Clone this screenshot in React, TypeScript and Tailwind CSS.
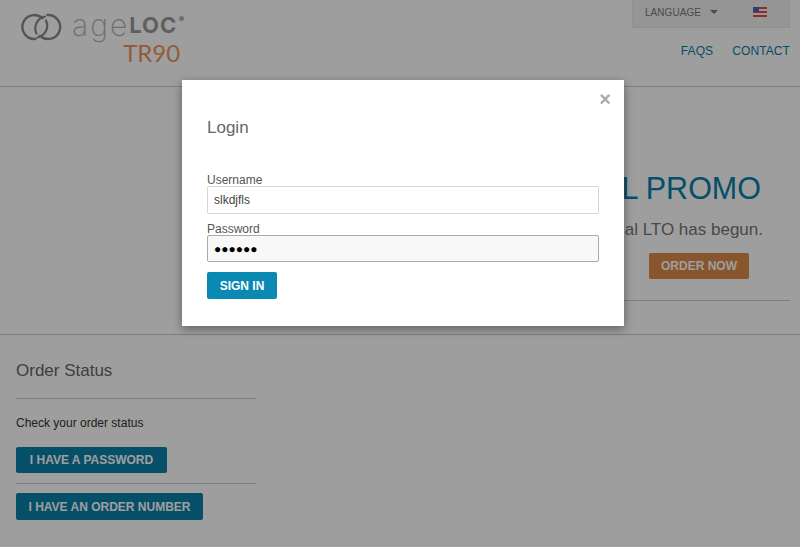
const SANS = "font-['Liberation_Sans',Arial,sans-serif]";

function Logo() {
  return (
    <div className="flex items-start">
      <svg width="41" height="28" viewBox="0 0 41 28" fill="none" className="mt-[13px] ml-[21px]">
        <path d="M21.5 5.2A12 12 0 1 0 14.5 26" stroke="#8a8a8a" strokeWidth="2.4" strokeLinecap="round" />
        <path d="M19 22.8A12 12 0 1 0 26.5 2" stroke="#8a8a8a" strokeWidth="2.4" strokeLinecap="round" />
        <path d="M25 7.5A12 12 0 0 1 16.5 24.5" stroke="#8a8a8a" strokeWidth="2.2" strokeLinecap="round" />
        <path d="M15.5 20.5A12 12 0 0 1 24 3.5" stroke="#8a8a8a" strokeWidth="2.2" strokeLinecap="round" />
      </svg>
      <div className="ml-[10px] flex flex-col items-end">
        <div className="mt-[8px] flex h-[35px] items-start leading-[34px] font-['Inter',sans-serif]">
          <span className="text-[30px] font-extralight tracking-[2px] text-[#b4b4b4]">age</span>
          <span className="text-[22px] font-bold tracking-[1px] text-[#9a9a9a]">LOC</span>
          <span className="mt-[8px] ml-[2px] h-[5px] w-[5px] rounded-full bg-[#b4b4b4]" />
        </div>
        <div className="mt-[-2px] mr-[4px] text-[24px] leading-[24px] text-[#ee9460] font-['Lato',sans-serif]">TR90</div>
      </div>
    </div>
  );
}

function Flag() {
  return (
    <svg width="14" height="10" viewBox="0 0 14 10">
      <rect width="14" height="10" fill="#f4f4f4" />
      <rect y="0" width="14" height="2" fill="#e04a4a" />
      <rect y="4" width="14" height="2" fill="#e04a4a" />
      <rect y="8" width="14" height="2" fill="#e04a4a" />
      <rect width="6" height="5" fill="#4a68b8" />
    </svg>
  );
}

function Header() {
  return (
    <header className="flex h-[87px] justify-between border-b border-[#ccc]">
      <Logo />
      <div className="flex flex-col items-end pr-[10px]">
        <div className="flex h-[28px] w-[158px] items-center border-x border-b border-[#e8e8e8] bg-[#f1f1f1] pb-[3px] pl-[12px] text-[10px] tracking-[0.05px] text-[#777]">
          <span>LANGUAGE</span>
          <span className="ml-[9px] h-0 w-0 border-x-[4px] border-t-[4px] border-x-transparent border-t-[#777]" />
          <span className="ml-[35px] flex"><Flag /></span>
        </div>
        <nav className="mt-[16px] flex gap-[19px] text-[12px] leading-[15px] tracking-[0.1px] text-[#0a7ea4]">
          <span>FAQS</span>
          <span>CONTACT</span>
        </nav>
      </div>
    </header>
  );
}

function Hero() {
  return (
    <section className="flex h-[248px] flex-col border-b border-[#ccc]">
      <div className="ml-auto mr-[10px] flex h-[214px] w-[560px] flex-col items-end border-b border-[#ccc] pr-[29px]">
        <h1 className="mt-[83px] text-[30.5px] leading-[36px] text-[#0a80a8]">ANNUAL PROMO</h1>
        <p className="mt-[13px] -mr-[2px] text-[17px] leading-[22px] text-[#757575]">The annual LTO has begun.</p>
        <button className="mt-[12px] mr-[12px] h-[26px] w-[100px] rounded-[2px] bg-[#dc8a48] text-[12px] font-bold text-white">
          ORDER NOW
        </button>
      </div>
    </section>
  );
}

function OrderStatus() {
  return (
    <section className="ml-[16px] w-[240px]">
      <h2 className="mt-[26px] text-[17px] leading-[20px] text-[#666]">Order Status</h2>
      <div className="mt-[17px] border-t border-[#ccc]" />
      <p className="mt-[17px] text-[12px] leading-[14px] text-[#333]">Check your order status</p>
      <button className="mt-[17px] flex h-[26px] w-[151px] items-center justify-center rounded-[2px] bg-[#0a80a8] text-[12px] font-bold text-white">
        I HAVE A PASSWORD
      </button>
      <div className="mt-[10px] border-t border-[#ccc]" />
      <button className="mt-[9px] flex h-[27px] w-[187px] items-center justify-center rounded-[2px] bg-[#0a80a8] text-[12px] font-bold text-white">
        I HAVE AN ORDER NUMBER
      </button>
    </section>
  );
}

function LoginModal() {
  return (
    <div className="absolute inset-0 bg-black/[0.38]">
      <div className="absolute left-[182px] top-[80px] h-[246px] w-[442px] bg-white px-[25px] shadow-[0_3px_9px_rgba(0,0,0,0.4)]">
        <span className="absolute right-[13px] top-[9px] text-[20px] font-bold leading-[20px] text-[#aaa]">×</span>
        <h3 className="mt-[38px] text-[17px] leading-[20px] text-[#666]">Login</h3>
        <label className="mt-[36px] block text-[12px] leading-[12px] text-[#555]">Username</label>
        <div className="flex h-[28px] w-[392px] items-center rounded-[2px] border border-[#d5d5d5] bg-white pl-[6px] text-[12px] text-[#444]">
          slkdjfls
        </div>
        <label className="mt-[9px] block text-[12px] leading-[12px] text-[#555]">Password</label>
        <div className="flex h-[27px] w-[392px] items-center rounded-[2px] border border-[#aaa] bg-[#f8f8f8] pl-[6px] text-[12px] text-black">
          ●●●●●●
        </div>
        <button className="mt-[10px] h-[27px] w-[70px] rounded-[2px] bg-[#0a89b3] text-[12px] font-bold text-white">
          SIGN IN
        </button>
      </div>
    </div>
  );
}

export default function App() {
  return (
    <div className={`relative h-[547px] w-[800px] overflow-hidden bg-white ${SANS}`}>
      <Header />
      <Hero />
      <OrderStatus />
      <LoginModal />
    </div>
  );
}
